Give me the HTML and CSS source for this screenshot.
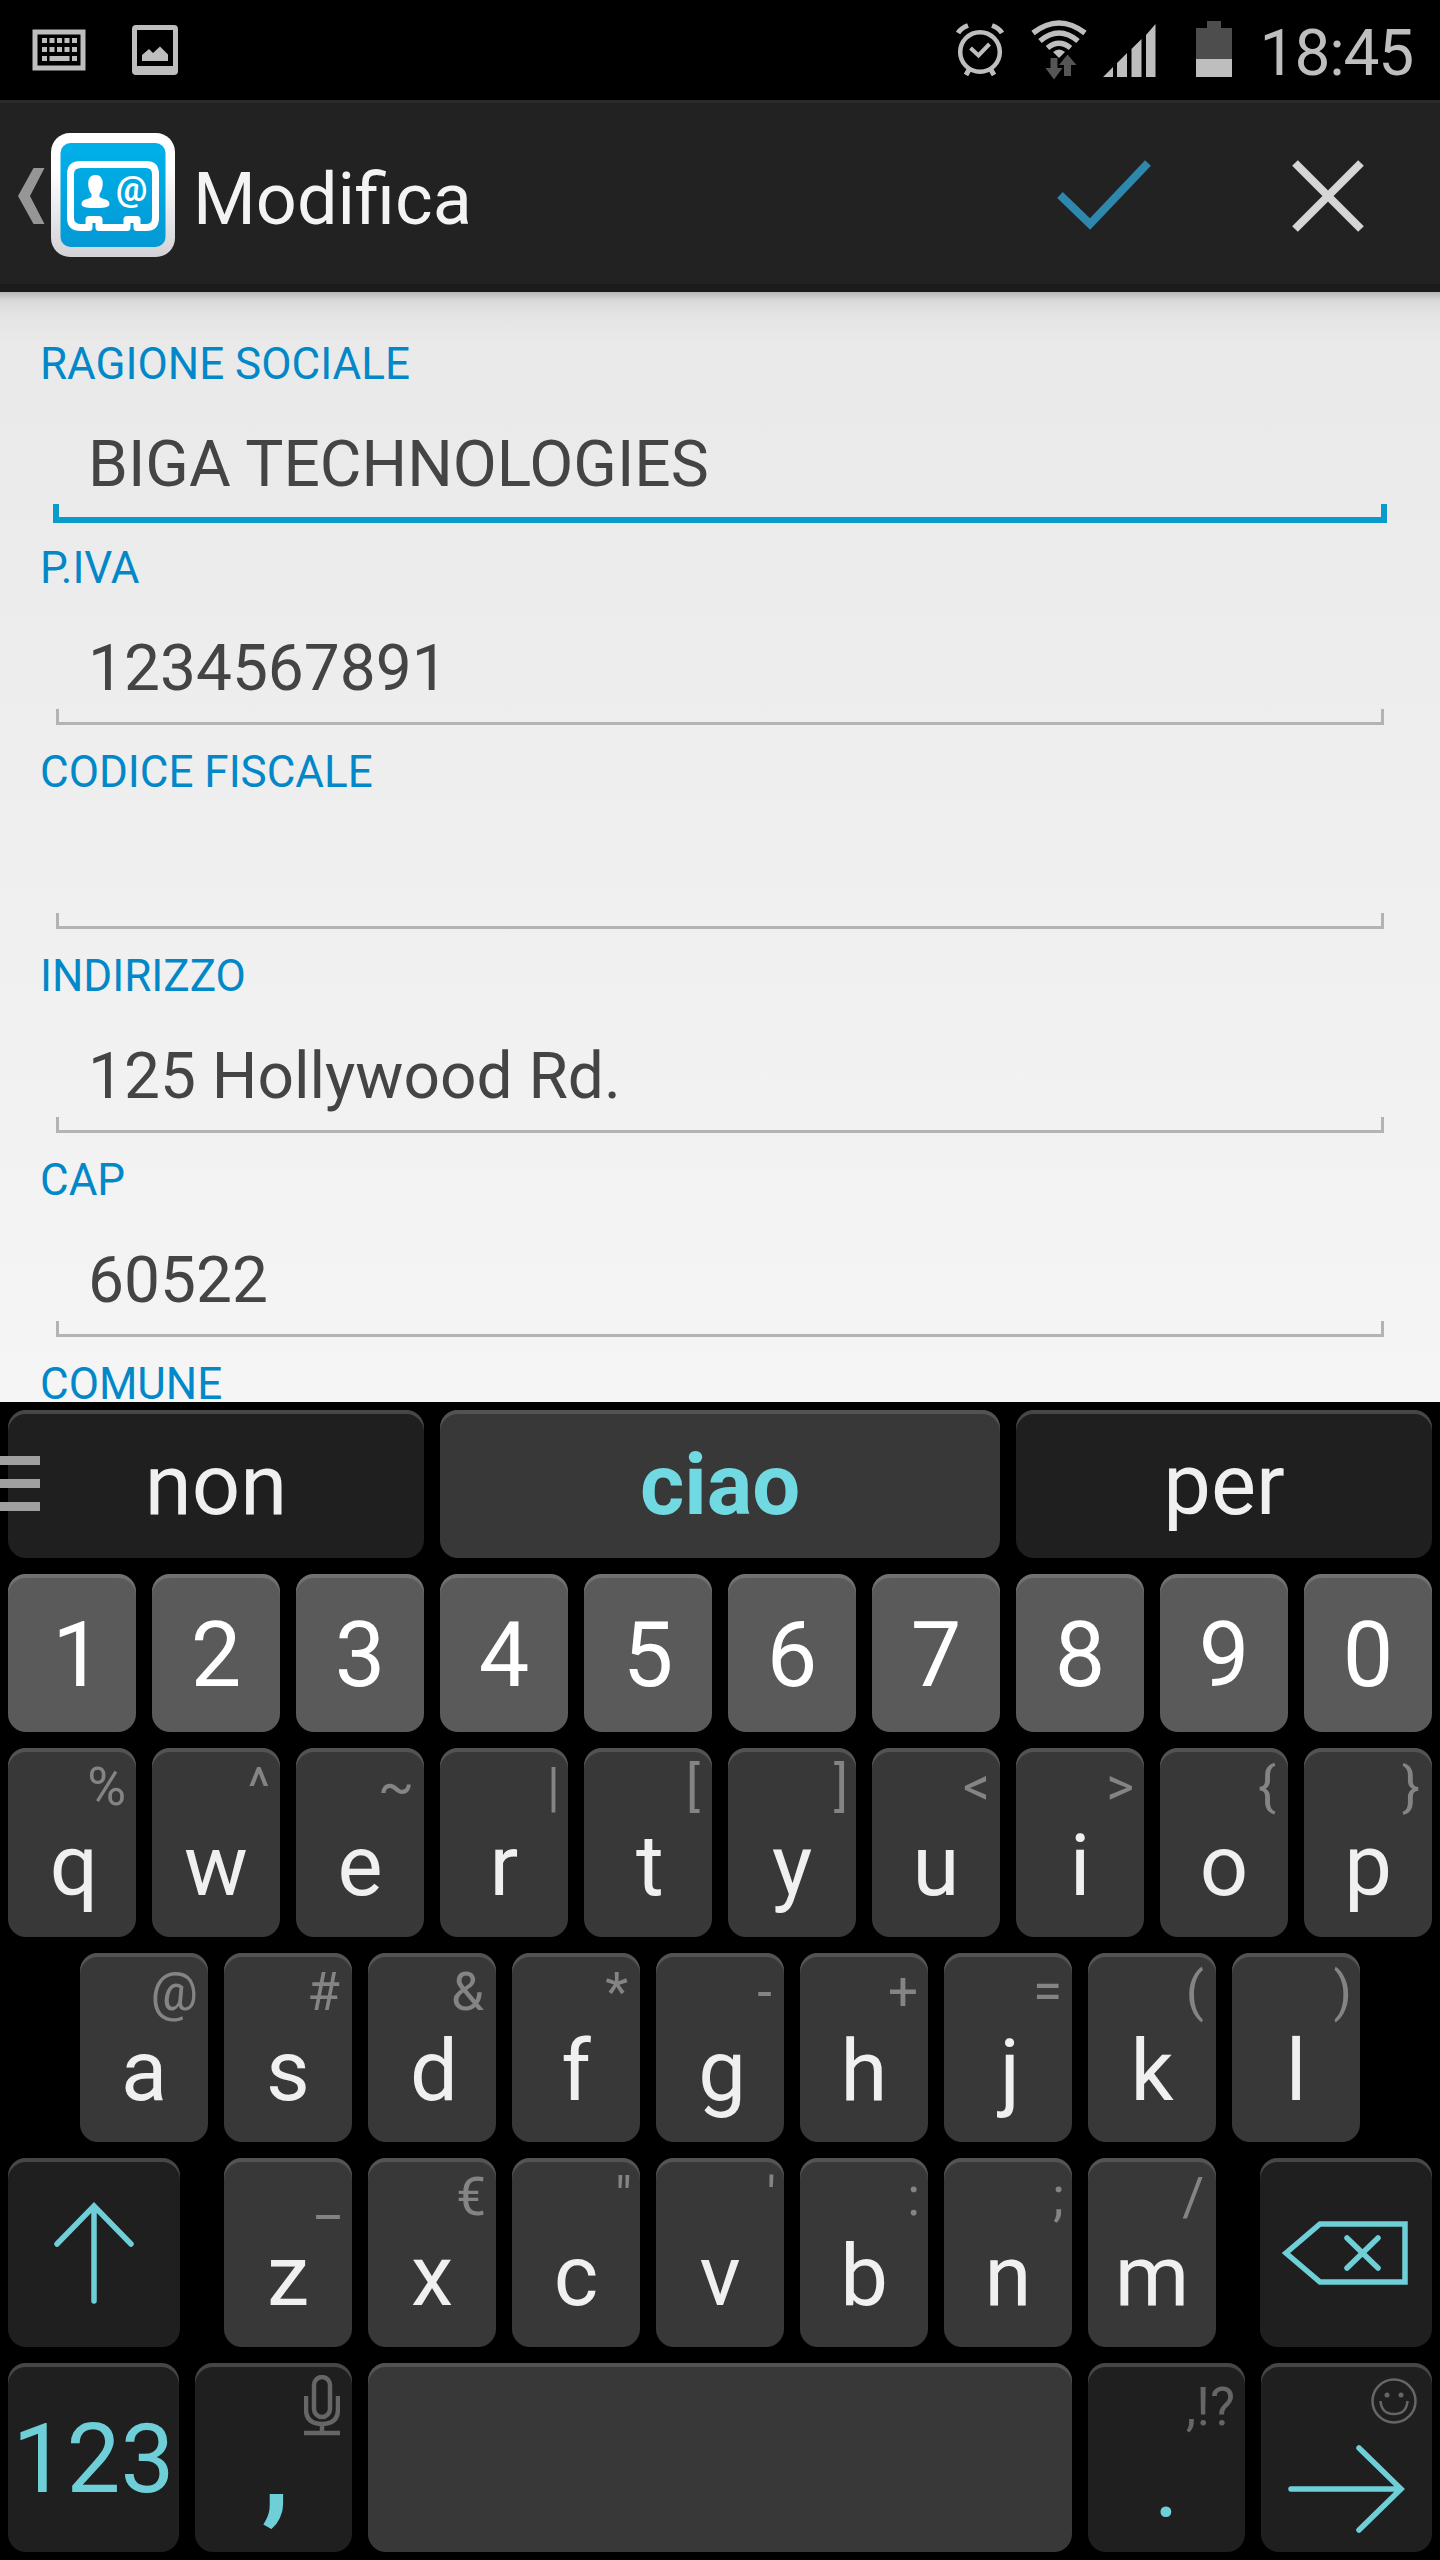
FILE: index.html
```html
<!DOCTYPE html>
<html lang="it">
<head>
    <meta charset="UTF-8">
    <meta name="viewport" content="width=device-width, initial-scale=1.0">
    <title>Modifica</title>
    <link rel="stylesheet" href="styles.css">
</head>
<body>
    <!-- Barra di stato -->
    <div class="status-bar">
        <svg class="st-keyboard" width="54" height="42" viewBox="0 0 54 42">
            <rect x="3" y="3" width="48" height="36" fill="none" stroke="#bebebe" stroke-width="5"/>
            <g fill="#bebebe">
                <path d="M10 9h5v5h-5zM17.5 9h5v5h-5zM25 9h5v5h-5zM32.500 9h5v5h-5zM40 9h5v5h-5z"/>
                <path d="M10 18h5v5h-5zM17.500 18h5v5h-5zM25 18h5v5h-5zM32.500 18h5v5h-5zM40 18h5v5h-5z"/>
                <path d="M10 27h5v5h-5zM17.500 27h20v5h-20zM40 27h5v5h-5z"/>
            </g>
        </svg>
        <svg class="st-image" width="46" height="50" viewBox="0 0 46 50">
            <path fill="#bebebe" fill-rule="evenodd" d="M4 0h38q4 0 4 4v42q0 4-4 4H4q-4 0-4-4V4q0-4 4-4zM5 5v36h36V5z"/>
            <path fill="#bebebe" d="M10 36v-6l7-6 4 4 7-6.500 8 8V36z"/>
        </svg>
        <div class="status-right">
            <svg class="st-alarm" width="48" height="54" viewBox="0 0 48 54" fill="none" stroke="#bebebe" stroke-width="4.500">
                <circle cx="24" cy="29" r="19.800"/>
                <path d="M14.500 25l8 7.500 11-11.500" stroke-width="4"/>
                <path d="M2 10Q5 5 12 2.500M46 10Q43 5 36 2.500M14 45l-4 7M34 45l4 7" stroke-width="5"/>
            </svg>
            <svg class="st-wifi" width="56" height="60" viewBox="0 0 56 60">
                <g fill="none" stroke="#bebebe" stroke-width="5.500">
                    <path d="M2 13Q28-7 54 13"/>
                    <path d="M9 21Q28 5 47 21"/>
                    <path d="M16.500 28Q28 18.500 39.500 28"/>
                </g>
                <path fill="#bebebe" d="M22 32q6-5 12 0l-6 6z"/>
                <path fill="#555" d="M19.500 38h7v10h5L23 59.500 14.500 48h5zM33 56h7V45h5.500L36.500 34.500 28 45h5z"/>
            </svg>
            <svg class="st-signal" width="54" height="54" viewBox="0 0 54 54" fill="#bebebe">
                <path d="M1 53l10-10v10zM15 53V39l10-10v24zM29.500 53V25l10-10v38zM44 53V11L53.500 0v53z"/>
            </svg>
            <svg class="st-battery" width="36" height="56" viewBox="0 0 36 56">
                <path fill="#4d4d4d" d="M11 0h14v7h11v31H0V7h11z"/>
                <path fill="#bebebe" d="M0 38h36v18H0z"/>
            </svg>
            <span class="clock">18:45</span>
        </div>
    </div>

    <!-- Intestazione -->
    <header class="action-bar">
        <svg class="back" width="28" height="58" viewBox="0 0 28 58">
            <path fill="#969696" d="M16.500 1h11L13 29l14.500 28h-11L1 29z"/>
        </svg>
        <svg class="app-icon" width="126" height="126" viewBox="0 0 126 126">
            <defs>
                <linearGradient id="frame" x1="0" y1="0" x2="0" y2="1">
                    <stop offset="0.300" stop-color="#fff"/>
                    <stop offset="1" stop-color="#d2d2d6"/>
                </linearGradient>
                <linearGradient id="blue" x1="0" y1="0" x2="0" y2="1">
                    <stop offset="0" stop-color="#00b0ea"/>
                    <stop offset="1" stop-color="#0499d4"/>
                </linearGradient>
            </defs>
            <rect x="1" y="1" width="124" height="124" rx="19" fill="url(#frame)"/>
            <rect x="10.500" y="11" width="105" height="104" rx="10" fill="url(#blue)"/>
            <path fill="none" stroke="#fff" stroke-width="7" stroke-linejoin="round" d="M31 32.500H96Q105.500 32.500 105.500 42V86Q105.500 95.500 96 95.500H87V87.500H77V95.500H49V87.500H39V95.500H31Q20.500 95.500 20.500 86V42Q20.500 32.500 31 32.500z"/>
            <path fill="#fff" d="M45.500 43c10 0 8 14 4 19v3c5 3 10 2 10 7.500 0 3-8 3.500-14 3.500s-14-.5-14-3.500c0-5.500 5-4.500 10-7.500v-3c-4-5-6-19 4-19z"/>
            <text x="66" y="69" class="at-sign">@</text>
        </svg>
        <h1>Modifica</h1>
        <button class="action" aria-label="Salva">
            <svg width="96" height="72" viewBox="0 0 96 72"><path fill="none" stroke="#2e87ac" stroke-width="8" d="M3 35l30 29L91 3"/></svg>
        </button>
        <button class="action close" aria-label="Chiudi">
            <svg width="74" height="74" viewBox="0 0 74 74"><path fill="none" stroke="#d6d6d6" stroke-width="8" d="M4 4l66 66M70 4L4 70"/></svg>
        </button>
    </header>

    <!-- Modulo -->
    <main class="form">
        <label for="ragione">RAGIONE SOCIALE</label>
        <input class="focused" id="ragione" type="text" value="BIGA TECHNOLOGIES">
        <label for="piva">P.IVA</label>
        <input id="piva" type="text" value="1234567891">
        <label for="cf">CODICE FISCALE</label>
        <input id="cf" type="text" value="">
        <label for="indirizzo">INDIRIZZO</label>
        <input id="indirizzo" type="text" value="125 Hollywood Rd.">
        <label for="cap">CAP</label>
        <input id="cap" type="text" value="60522">
        <label>COMUNE</label>
    </main>

    <!-- Tastiera -->
    <section class="keyboard">
        <div class="row suggestions">
            <div class="key dark">non</div>
            <div class="key main">ciao</div>
            <div class="key dark">per</div>
            <div class="menu-handle"><i></i><i></i><i></i></div>
        </div>
        <div class="row numbers">
            <div class="key one">1</div>
            <div class="key">2</div>
            <div class="key">3</div>
            <div class="key">4</div>
            <div class="key">5</div>
            <div class="key">6</div>
            <div class="key">7</div>
            <div class="key">8</div>
            <div class="key">9</div>
            <div class="key">0</div>
        </div>
        <div class="row letters">
            <div class="key"><span class="hint">%</span><b class="nudge">q</b></div>
            <div class="key"><span class="hint">^</span><b>w</b></div>
            <div class="key"><span class="hint">~</span><b>e</b></div>
            <div class="key"><span class="hint out">|</span><b>r</b></div>
            <div class="key"><span class="hint in">[</span><b class="nudge">t</b></div>
            <div class="key"><span class="hint out">]</span><b>y</b></div>
            <div class="key"><span class="hint">&lt;</span><b>u</b></div>
            <div class="key"><span class="hint">&gt;</span><b>i</b></div>
            <div class="key"><span class="hint in">{</span><b>o</b></div>
            <div class="key"><span class="hint in">}</span><b>p</b></div>
        </div>
        <div class="row letters middle">
            <div class="key"><span class="hint">@</span><b>a</b></div>
            <div class="key"><span class="hint in">#</span><b>s</b></div>
            <div class="key"><span class="hint in">&amp;</span><b class="nudge">d</b></div>
            <div class="key"><span class="hint in">*</span><b>f</b></div>
            <div class="key"><span class="hint in">-</span><b class="nudge">g</b></div>
            <div class="key"><span class="hint">+</span><b>h</b></div>
            <div class="key"><span class="hint">=</span><b class="nudge">j</b></div>
            <div class="key"><span class="hint in">(</span><b>k</b></div>
            <div class="key"><span class="hint out">)</span><b>l</b></div>
        </div>
        <div class="row letters bottom">
            <div class="key dark shift">
                <svg width="82" height="102" viewBox="0 0 82 102"><path d="M41 99V4M4 42L41 4l37 38"/></svg>
            </div>
            <div class="key"><span class="hint in">_</span><b>z</b></div>
            <div class="key"><span class="hint">€</span><b>x</b></div>
            <div class="key"><span class="hint out">"</span><b>c</b></div>
            <div class="key"><span class="hint out">'</span><b>v</b></div>
            <div class="key"><span class="hint out">:</span><b>b</b></div>
            <div class="key"><span class="hint out">;</span><b>n</b></div>
            <div class="key"><span class="hint in">/</span><b>m</b></div>
            <div class="key dark backspace">
                <svg width="128" height="68" viewBox="0 0 128 68"><path d="M4 34L38 5h85v58H38zM65 19l31 30M96 19L65 49"/></svg>
            </div>
        </div>
        <div class="row controls">
            <div class="key dark digits">123</div>
            <div class="key dark comma">
                <svg class="corner-icon" width="36" height="62" viewBox="0 0 36 62">
                    <rect x="10" y="2" width="16" height="40" rx="8"/>
                    <path d="M2 21v13q0 15 16 15t16-15V21M18 49v8M0 58h36"/>
                </svg>
                <b>,</b>
            </div>
            <div class="key space"></div>
            <div class="key dark period"><span class="hint">,!?</span><b>.</b></div>
            <div class="key dark enter">
                <svg class="corner-icon smiley" width="46" height="46" viewBox="0 0 46 46">
                    <circle cx="23" cy="23" r="21.500"/>
                    <path d="M9.500 23q1 13 13.500 13t13.500-13"/>
                    <circle class="eye" cx="16" cy="17" r="2.500"/>
                    <circle class="eye" cx="30" cy="17" r="2.500"/>
                </svg>
                <svg class="arrow" width="118" height="90" viewBox="0 0 118 90"><path d="M4 45h109M72 4l42 41-42 41"/></svg>
            </div>
        </div>
    </section>
</body>
</html>
```
FILE: styles.css
```css
* {
    margin: 0;
    padding: 0;
    box-sizing: border-box;
}

body {
    width: 1440px;
    height: 2560px;
    background: #000;
    font-family: Roboto, "Liberation Sans", sans-serif;
    overflow: hidden;
}

svg {
    display: block;
}

/* Barra di stato */
.status-bar {
    height: 100px;
    padding: 0 27px 0 32px;
    display: flex;
    align-items: flex-start;
}

.st-keyboard { margin-top: 29px; }
.st-image { margin: 25px 0 0 46px; }

.status-right {
    margin-left: auto;
    display: flex;
    align-items: flex-start;
}

.st-alarm { margin-top: 23px; }
.st-wifi { margin: 20px 0 0 27px; }
.st-signal { margin: 24px 0 0 15px; }
.st-battery { margin: 21px 0 0 40px; }

.clock {
    margin-left: 28px;
    color: #bebebe;
    font-size: 64px;
    letter-spacing: -1.2px;
    line-height: 107px;
}

/* Intestazione */
.action-bar {
    height: 192px;
    padding: 0 75px 0 17px;
    display: flex;
    align-items: center;
    background: #222;
    border-top: 3px solid #2b2b2b;
    border-bottom: 8px solid #1b1b1b;
}

.back { margin-top: 5px; }
.app-icon { margin: 3px 0 0 5px; }

.at-sign {
    fill: #fff;
    font-size: 35px;
    font-weight: 700;
}

.action-bar h1 {
    flex: 1;
    margin: 11px 0 0 17px;
    color: #f3f3f3;
    font-size: 72px;
    font-weight: 400;
}

.action {
    border: none;
    background: none;
    margin-top: 5px;
}

.close { margin-left: 138px; }

/* Modulo */
.form {
    height: 1110px;
    padding-top: 46px;
    overflow: hidden;
    background:
        linear-gradient(rgba(0,0,0,0.22), rgba(0,0,0,0.07) 8px, rgba(0,0,0,0.02) 24px, transparent 50px) no-repeat,
        linear-gradient(#e9e9e9, #f5f5f5);
}

.form label {
    display: block;
    height: 52px;
    padding-left: 40px;
    color: #0288c8;
    font-size: 44px;
    line-height: 52px;
}

.form input {
    --line: #b3b3b3;
    display: block;
    width: 1328px;
    height: 131px;
    margin: 0 0 21px 56px;
    padding: 17px 32px 0;
    border: none;
    outline: none;
    color: #444;
    font-family: inherit;
    font-size: 64px;
    background:
        linear-gradient(var(--line), var(--line)) left bottom / 3px 16px no-repeat,
        linear-gradient(var(--line), var(--line)) right bottom / 3px 16px no-repeat,
        linear-gradient(var(--line), var(--line)) left bottom / 100% 3px no-repeat;
}

.form input.focused {
    --line: #0a9bcd;
    width: 1334px;
    height: 133px;
    margin: 0 0 19px 53px;
    padding: 15px 35px 0;
    background-size: 6px 19px, 6px 19px, 100% 6px;
}

/* Tastiera */
.keyboard {
    height: 1158px;
    padding: 8px;
    display: flex;
    flex-direction: column;
    gap: 16px;
}

.row {
    display: flex;
    gap: 16px;
    height: 189px;
}

.key {
    width: 128px;
    border-radius: 18px;
    background: #383838;
    box-shadow: inset 0 4px 0 #535353;
    color: #f0f0f0;
    font-size: 85px;
}

.key b { font-weight: 400; }

.dark {
    background: #1f1f1f;
    box-shadow: inset 0 4px 0 #464646;
}

.suggestions {
    position: relative;
    height: 148px;
}

.suggestions .key {
    width: 416px;
    line-height: 150px;
    text-align: center;
}

.suggestions .main {
    width: 560px;
    color: #70d9e2;
    font-weight: 700;
}

/* Maniglia del menu sopra i suggerimenti */
.menu-handle {
    position: absolute;
    left: -8px;
    top: 46px;
    width: 40px;
    display: grid;
    gap: 14px;
}

.menu-handle i {
    height: 9px;
    background: #a0a0a0;
}

.numbers { height: 158px; }

.numbers .key {
    background: #5a5a5a;
    box-shadow: inset 0 4px 0 #707070;
    color: #fff;
    font-size: 90px;
    line-height: 163px;
    text-align: center;
}

.numbers .one { padding-left: 11px; }

.middle { padding-left: 72px; }

.letters .key,
.comma,
.period,
.enter {
    display: grid;
    grid-template: 100% / 100%;
}

.letters .key > *,
.comma > *,
.period > *,
.enter > * {
    grid-area: 1 / 1;
}

.letters b {
    margin-top: 68px;
    line-height: 100px;
    text-align: center;
}

.letters .nudge { padding-left: 4px; }

.hint {
    margin: 8px 10px 0 0;
    color: #848484;
    font-size: 53px;
    line-height: 62px;
    text-align: right;
}

.hint.in { margin-right: 12px; }
.hint.out { margin-right: 8px; }

.letters .shift,
.letters .backspace {
    width: 172px;
    place-items: center;
}

.shift { margin-right: 28px; }
.backspace { margin-left: 28px; }

.dark svg {
    fill: none;
    stroke: #6fcfd8;
    stroke-width: 5.5px;
    stroke-linecap: round;
}

.controls .dark { color: #6fcfd8; }

.controls .digits {
    width: 171px;
    font-size: 96px;
    line-height: 192px;
    text-align: center;
}

.comma,
.period {
    width: 157px;
}

.comma b {
    font-size: 128px;
    font-weight: 500;
    line-height: 140px;
    margin-top: 32px;
    padding-left: 4px;
    text-align: center;
}

.period b {
    font-size: 96px;
    line-height: 120px;
    margin-top: 60px;
    text-align: center;
}

.period .hint {
    margin-top: 13px;
    color: #666;
}

.space { width: 704px; }

.enter { width: 171px; }

.dark .corner-icon {
    justify-self: end;
    margin: 12px 12px 0 0;
    stroke: #666;
    stroke-width: 4.5px;
    stroke-linecap: butt;
}

.dark .smiley {
    margin: 15px 15px 0 0;
    stroke-width: 2.5px;
}

.eye {
    fill: #666;
    stroke: none;
}

.arrow { margin: 81px 0 0 26px; }
```
